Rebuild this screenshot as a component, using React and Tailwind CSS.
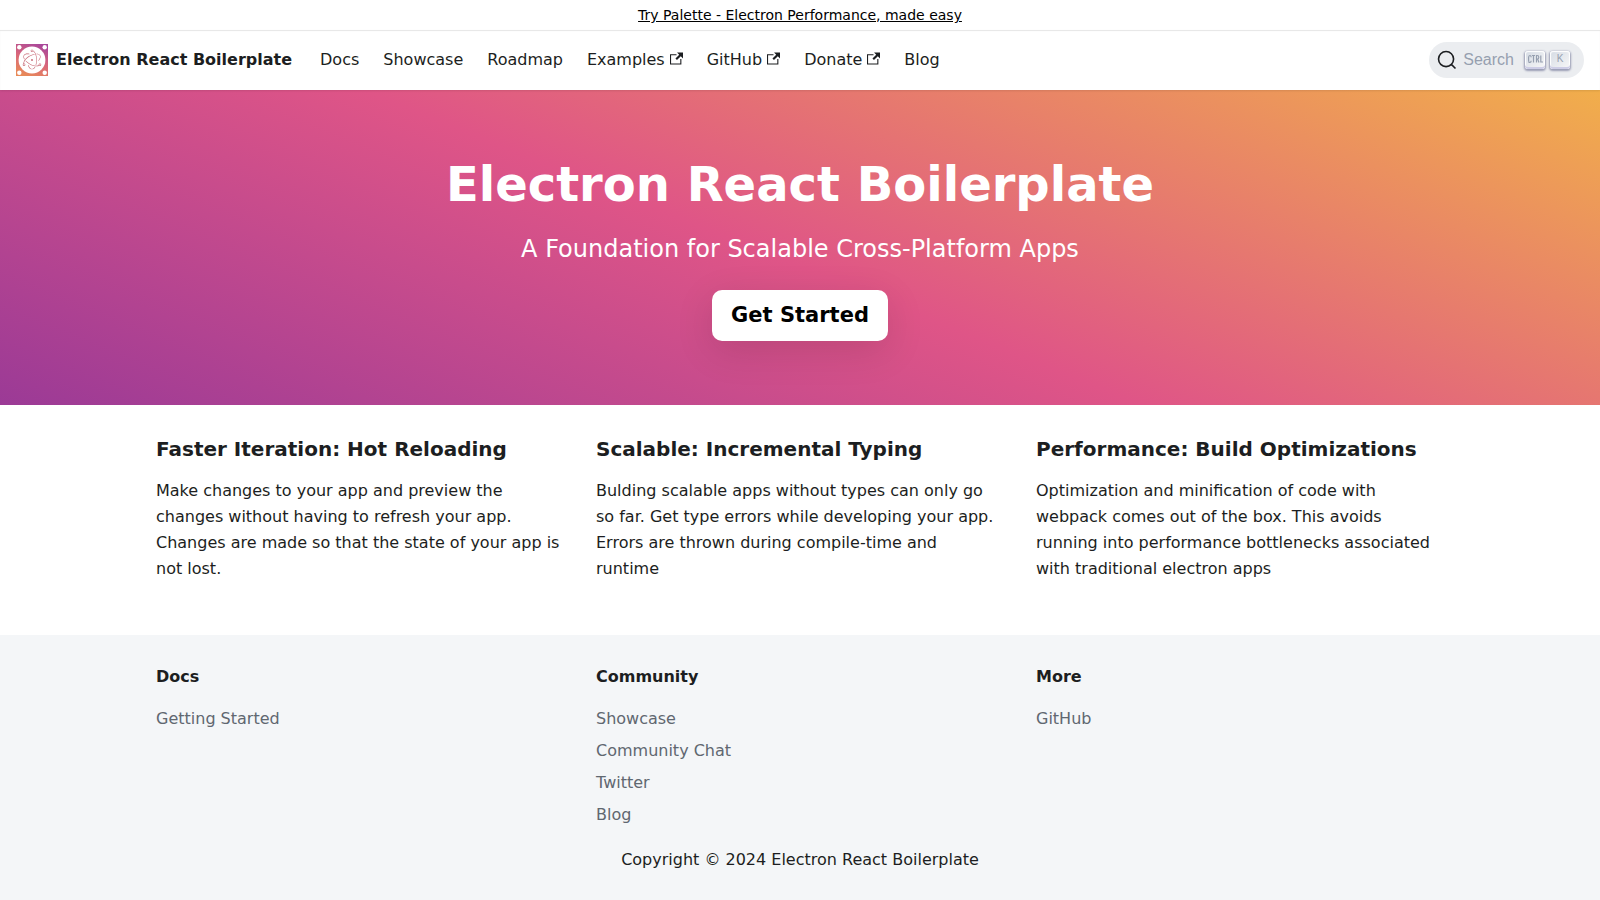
import { useId } from "react";
import { SiElectron } from "react-icons/si";

const navLinks = [
  { label: "Docs" },
  { label: "Showcase" },
  { label: "Roadmap" },
  { label: "Examples", external: true },
  { label: "GitHub", external: true },
  { label: "Donate", external: true },
  { label: "Blog" },
];

const features = [
  {
    title: "Faster Iteration: Hot Reloading",
    text: "Make changes to your app and preview the changes without having to refresh your app. Changes are made so that the state of your app is not lost.",
  },
  {
    title: "Scalable: Incremental Typing",
    text: "Bulding scalable apps without types can only go so far. Get type errors while developing your app. Errors are thrown during compile-time and runtime",
  },
  {
    title: "Performance: Build Optimizations",
    text: "Optimization and minification of code with webpack comes out of the box. This avoids running into performance bottlenecks associated with traditional electron apps",
  },
];

const footerColumns = [
  { title: "Docs", links: ["Getting Started"] },
  { title: "Community", links: ["Showcase", "Community Chat", "Twitter", "Blog"] },
  { title: "More", links: ["GitHub"] },
];

function Logo() {
  const id = useId();
  return (
    <svg viewBox="0 0 32 32" className="size-8 shrink-0" aria-hidden="true">
      <defs>
        <linearGradient id={id} x1="0.3" y1="1" x2="0.7" y2="0">
          <stop offset="0" stopColor="#e88a58" />
          <stop offset="0.5" stopColor="#d9667a" />
          <stop offset="1" stopColor="#a9479a" />
        </linearGradient>
      </defs>
      <rect width="32" height="32" fill={`url(#${id})`} />
      <g fill="#fff">
        <circle cx="3.3" cy="3.3" r="2.2" />
        <circle cx="28.7" cy="3.3" r="2.2" />
        <circle cx="3.3" cy="28.7" r="2.2" />
        <circle cx="28.7" cy="28.7" r="2.2" />
        <circle cx="16" cy="16" r="13.4" />
      </g>
      <SiElectron x="6" y="5.500" size={20} color="#c4606e" />
    </svg>
  );
}

function ExternalIcon() {
  return (
    <svg viewBox="0 0 24 24" className="ml-[5px] inline size-[13px] align-baseline" fill="currentColor" aria-hidden="true">
      <path d="M21 13v10h-21v-19h12v2h-10v15h17v-8h2zm3-12h-10.988l4.035 4-6.977 7.070 2.828 2.828 6.977-7.070 4.125 4.172v-11z" />
    </svg>
  );
}

function Key({ children }) {
  return (
    <kbd className="flex h-[18px] w-5 items-center justify-center rounded-[3px] bg-linear-to-br from-[#d5dbe4] to-[#f8f8f8] pb-[3px] font-['Liberation_Sans',Arial,sans-serif] text-[#969faf] shadow-[inset_0_-2px_0_0_#cdcde6,inset_0_0_1px_1px_#fff,0_1px_2px_1px_rgba(30,35,90,0.4)]">
      {children}
    </kbd>
  );
}

function CtrlGlyph() {
  return (
    <svg viewBox="0 0 15 15" className="size-[15px]" fill="none" stroke="currentColor" strokeWidth="1.200" aria-label="Ctrl">
      <path d="M4 4.500h3M5.500 4.500v7M8.500 11.500v-7h.8c1 0 1.500.500 1.500 1.800s-.5 1.800-1.500 1.800h-.8M9.700 8.100l1.300 3.400M12.800 4.500v6.500h2.200M3.200 6.200c-.1-1.200-.5-1.700-1.300-1.700C1 4.500.6 5.300.6 6.600v2.800c0 1.400.4 2.100 1.300 2.100.8 0 1.200-.6 1.300-1.700" />
    </svg>
  );
}

export default function App() {
  return (
    <div className="flex min-h-screen flex-col bg-white font-['DejaVu_Sans',sans-serif] text-base text-[#1c1e21]">
      <div className="flex h-[30px] items-center justify-center text-sm text-black">
        <a href="#palette" className="underline">
          Try Palette - Electron Performance, made easy
        </a>
      </div>

      <nav className="relative z-10 flex h-[60px] items-center justify-between bg-white px-4 shadow-[0_1px_2px_0_rgba(0,0,0,0.1),inset_0_1px_1px_0_rgba(0,0,0,0.1)]">
        <div className="flex items-center">
          <a href="#home" className="mr-4 flex items-center gap-2 font-bold">
            <Logo />
            Electron React Boilerplate
          </a>
          {navLinks.map((link) => (
            <a key={link.label} href={`#${link.label.toLowerCase()}`} className="px-3 py-1">
              {link.label}
              {link.external && <ExternalIcon />}
            </a>
          ))}
        </div>
        <button type="button" className="flex h-9 items-center rounded-full bg-[#ebedf0] px-2 font-['Liberation_Sans',Arial,sans-serif] text-[#969faf]">
          <svg viewBox="0 0 20 20" className="size-5 text-[#1c1e21]" fill="none" stroke="currentColor" strokeWidth="1.600" strokeLinecap="round" aria-hidden="true">
            <path d="M14.386 14.386l4.088 4.088-4.088-4.088c-2.942 2.942-7.711 2.942-10.653 0-2.942-2.942-2.942-7.711 0-10.653 2.942-2.942 7.711-2.942 10.653 0 2.942 2.942 2.942 7.711 0 10.653z" />
          </svg>
          <span className="pr-[11px] pl-[6px]">Search</span>
          <span className="flex gap-[5px] pr-[6px]">
            <Key>
              <CtrlGlyph />
            </Key>
            <Key>
              <span className="text-[10px] leading-none">K</span>
            </Key>
          </span>
        </button>
      </nav>

      <header className="flex flex-col items-center bg-[linear-gradient(22deg,#9b3a96_0%,#df5587_48%,#f1ae4b_100%)] px-4 py-16 text-center text-white">
        <h1 className="text-5xl leading-[60px] font-bold">Electron React Boilerplate</h1>
        <p className="mt-4 text-2xl leading-[38px]">A Foundation for Scalable Cross-Platform Apps</p>
        <a
          href="#getting-started"
          className="mt-[22px] flex h-[51px] items-center rounded-[10px] bg-white px-[19px] text-[21px] font-bold text-black shadow-[0_10px_38px_rgba(0,0,0,0.12)]"
        >
          Get Started
        </a>
      </header>

      <main className="mx-auto grid w-full max-w-[1320px] grid-cols-3 pt-8 pb-[53px]">
        {features.map((feature) => (
          <section key={feature.title} className="px-4">
            <h2 className="text-xl leading-[25px] font-bold">{feature.title}</h2>
            <p className="mt-4 leading-[26px]">{feature.text}</p>
          </section>
        ))}
      </main>

      <footer className="flex-1 bg-[#f4f6f8] pt-8 pb-6">
        <div className="mx-auto grid w-full max-w-[1320px] grid-cols-3">
          {footerColumns.map((column) => (
            <div key={column.title} className="px-4">
              <h3 className="mb-4 leading-5 font-bold">{column.title}</h3>
              <ul>
                {column.links.map((link) => (
                  <li key={link} className="leading-8 text-[#606770]">
                    <a href={`#${link.toLowerCase().replace(" ", "-")}`}>{link}</a>
                  </li>
                ))}
              </ul>
            </div>
          ))}
        </div>
        <p className="mt-4 text-center leading-[26px]">Copyright © 2024 Electron React Boilerplate</p>
      </footer>
    </div>
  );
}
